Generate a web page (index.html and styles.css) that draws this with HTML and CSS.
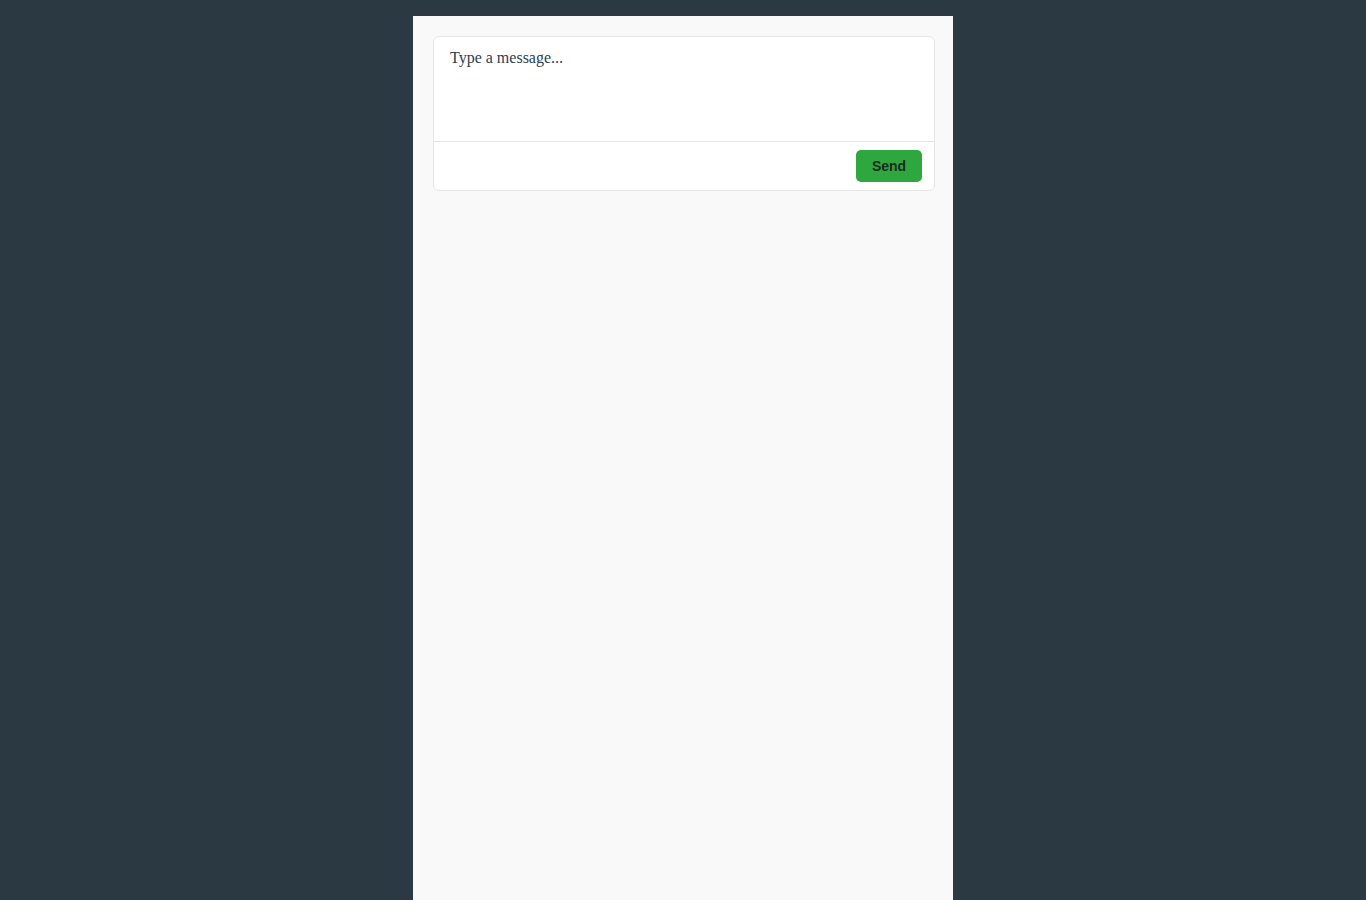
FILE: index.html
```html
<!DOCTYPE html>
<html lang="en">
<head>
    <meta charset="UTF-8">
    <meta name="viewport" content="width=device-width, initial-scale=1.0">
    <title>Chat</title>
    <link rel="stylesheet" href="styles.css">
</head>
<body>
    <div class="chat-panel">
        <div class="composer">
            <textarea class="composer-input" placeholder="Type a message..."></textarea>
            <div class="composer-footer">
                <button type="button" class="send-btn">Send</button>
            </div>
        </div>
    </div>
</body>
</html>
```

FILE: styles.css
```css
html, body {
    height: 100%;
}

body {
    margin: 0;
    padding-top: 16px;
    box-sizing: border-box;
    background-color: #2b3a42;
    font-family: "Liberation Serif", serif;
    overflow: hidden;
}

.chat-panel {
    width: 540px;
    min-height: 100%;
    margin: 0 auto;
    padding: 20px 18px 20px 20px;
    box-sizing: border-box;
    background-color: #f9f9f9;
}

.composer {
    display: flex;
    flex-direction: column;
    background-color: white;
    border: 1px solid #e6e6e6;
    border-radius: 6px;
}

.composer-input {
    height: 105px;
    padding: 12px 16px;
    box-sizing: border-box;
    border: none;
    border-bottom: 1px solid #e6e6e6;
    border-radius: 6px 6px 0 0;
    resize: none;
    outline: none;
    font-family: "Liberation Serif", serif;
    font-size: 16px;
    color: #2c3e50;
    background: transparent;
}

.composer-input::placeholder {
    color: #2c3e50;
    opacity: 1;
}

.composer-footer {
    display: flex;
    justify-content: flex-end;
    padding: 8px 12px;
}

.send-btn {
    width: 66px;
    height: 32px;
    border: none;
    border-radius: 5px;
    background-color: #2ea83e;
    color: #1b2a1e;
    font-family: "Liberation Sans", Arial, sans-serif;
    font-size: 14px;
    font-weight: bold;
    cursor: pointer;
}
```
